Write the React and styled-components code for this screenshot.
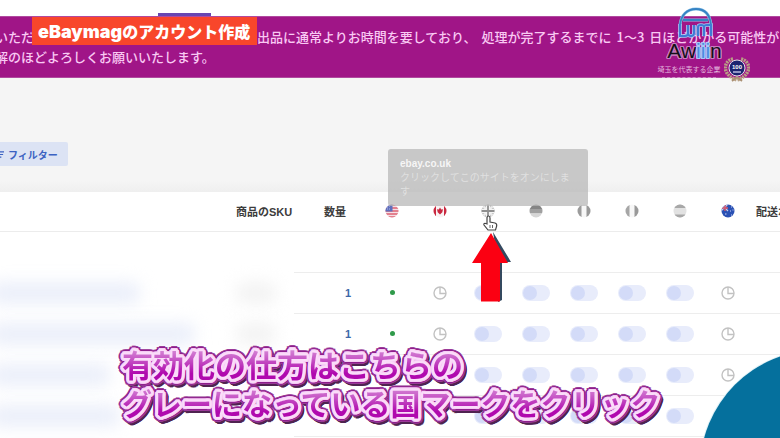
import React from 'react';
import styled, { createGlobalStyle, css } from 'styled-components';

const GlobalStyle = createGlobalStyle`
  * { box-sizing: border-box; }
  body {
    margin: 0;
    background: #fff;
    font-family: "Liberation Sans", "Noto Sans CJK JP", sans-serif;
    color: #333;
  }
  button { font: inherit; border: 0; padding: 0; margin: 0; background: none; cursor: pointer; }
`;

const ring = (radius, color, dx = 0, dy = 0) =>
  Array.from({ length: 24 }, (_, i) => {
    const a = (i / 24) * Math.PI * 2;
    return `${(Math.cos(a) * radius + dx).toFixed(2)}px ${(Math.sin(a) * radius + dy).toFixed(2)}px 0 ${color}`;
  }).join(', ');

const Scene = styled.main`
  position: relative;
  min-height: 100vh;
  max-height: 100vh;
  overflow: hidden;
  background: #fff;
`;

const TabStrip = styled.div`
  height: 16px;
  padding-left: 158px;
  display: flex;
  align-items: flex-end;
`;

const ActiveTab = styled.span`
  width: 53px;
  height: 3px;
  background: #6746b2;
`;

const Notice = styled.section`
  height: 62px;
  padding-top: 10px;
  background: #a01587;
  border-top: 1px solid #b04a9f;
  border-bottom: 1px solid #b04a9f;
  color: #f9c9f3;
  font-size: 13px;
  font-weight: 500;
  font-family: "Noto Sans CJK JP", sans-serif;
  line-height: 20px;
  white-space: nowrap;
`;

const NoticeLine = styled.p`
  margin: 0 0 0 -5px;
  display: flex;
`;

const Lead = styled.span`
  flex: none;
  width: 262px;
`;

const Clauses = styled.span`
  display: flex;
  gap: 5px;
`;

const Toolbar = styled.div`
  height: 114px;
  display: flex;
  align-items: flex-start;
  padding-top: 64px;
  background: linear-gradient(#f5f5f5 90%, #efefef);
`;

const FilterButton = styled.button`
  && {
    display: flex;
    align-items: center;
    gap: 4px;
    height: 24px;
    margin-left: -8px;
    padding: 0 10px 0 4px;
    border-radius: 2px;
    background: #dce3f4;
    color: #3b62c2;
    font-size: 10px;
    font-weight: 700;
  }
`;

const Table = styled.table`
  width: 100%;
  table-layout: fixed;
  border-collapse: collapse;
  font-size: 11px;
`;

const Col = styled.col`
  width: ${(p) => (p.$w ? `${p.$w}px` : 'auto')};
`;

const HeadCell = styled.th`
  height: 39px;
  padding: 0 ${(p) => p.$right || 0}px 0 ${(p) => p.$left || 0}px;
  border-bottom: 1px solid #ececec;
  text-align: ${(p) => p.$align || 'center'};
  color: #3c3c3c;
  white-space: nowrap;
`;

const Cell = styled.td`
  height: 41px;
  padding: 0 ${(p) => p.$right || 0}px 0 0;
  text-align: ${(p) => p.$align || 'center'};
  vertical-align: middle;
  ${(p) => p.$line && css`border-bottom: 1px solid #ededed;`}
`;

const Smudge = styled.div`
  height: 22px;
  width: ${(p) => p.$w}px;
  margin-left: ${(p) => p.$x || 0}px;
  border-radius: 8px;
  background: ${(p) => p.$c};
  filter: blur(8px);
`;

const Quantity = styled.a`
  color: #3d68a8;
  font-weight: 700;
  text-decoration: none;
`;

const FlagButton = styled.button`
  display: block;
  && { margin: 0 auto; }
  width: 14px;
  height: 14px;
  svg { display: block; }
`;

const Centered = styled.span`
  display: flex;
  justify-content: center;
`;

const Dot = styled.span`
  width: 5px;
  height: 5px;
  border-radius: 50%;
  background: #2f9a4a;
`;

const Toggle = styled.input`
  appearance: none;
  display: block;
  width: 28px;
  height: 16px;
  margin: 0 auto;
  border-radius: 8px;
  background: #e8ecfb;
  &::before {
    content: "";
    display: block;
    width: 14px;
    height: 14px;
    margin: 1px;
    border-radius: 50%;
    background: #d3dbf8;
  }
`;

const Tooltip = styled.div`
  position: absolute;
  left: 388px;
  top: 149px;
  width: 200px;
  height: 57px;
  padding: 8px 12px;
  border-radius: 3px;
  background: rgba(184, 184, 184, 0.74);
  color: rgba(255, 255, 255, 0.45);
  font-size: 10px;
  line-height: 14px;
`;

const Site = styled.strong`
  display: block;
  color: rgba(255, 255, 255, 0.85);
`;

const TitleTag = styled.h1`
  position: absolute;
  left: 32px;
  top: 17px;
  display: flex;
  align-items: center;
  height: 28px;
  margin: 0;
  padding: 0 7px 0 6px;
  background: #f8462b;
  color: #fff;
  font-family: "Noto Sans CJK JP", sans-serif;
  font-weight: 900;
  font-size: 16px;
  white-space: nowrap;
  span { font-family: Inter, sans-serif; font-size: 18px; }
`;

const Brand = styled.div`
  position: absolute;
  right: 28px;
  top: 7px;
  display: grid;
  grid-template-columns: 70px 28px;
`;

const BrandMain = styled.div`
  display: flex;
  flex-direction: column;
  align-items: center;
  padding-bottom: 4px;
  svg { margin-left: 14px; }
`;

const BrandName = styled.div`
  margin: 1px 0 0 11px;
  height: 24px;
  font-size: 21px;
  line-height: 24px;
  color: #141018;
  text-shadow: ${ring(1, '#c77bbd')};
  span { color: #4c8de0; text-shadow: ${ring(1, '#a9c6f5')}; }
`;

const BrandTag = styled.div`
  margin-top: 2px;
  font-size: 7px;
  line-height: 10px;
  color: #e3b7dd;
  white-space: nowrap;
`;

const BrandRule = styled.div`
  width: 54px;
  margin-top: 2px;
  border-top: 1px dashed #cf86c5;
`;

const BadgeSlot = styled.div`
  align-self: end;
  height: 26px;
`;

const ArrowMark = styled.svg`
  position: absolute;
  left: 470px;
  top: 213px;
`;

const Circle = styled.div`
  position: absolute;
  right: -158px;
  bottom: -150px;
  width: 238px;
  height: 238px;
  border-radius: 50%;
  background: #05709d;
  box-shadow: 0 0 0 1px #e2f3f8;
`;

const Caption = styled.p`
  position: absolute;
  left: 122px;
  bottom: 17px;
  margin: 0;
  font-family: "Noto Sans CJK JP", sans-serif;
  font-weight: 700;
  line-height: 38px;
  white-space: nowrap;
`;

const CaptionLine = styled.span`
  position: relative;
  display: block;
  width: max-content;
  font-size: ${(p) => p.$size}px;
  color: #fbdcfa;
  text-shadow: ${ring(2, '#fbdcfa')}, ${ring(1, '#fbdcfa')}, ${ring(3, '#f6cdf5')}, ${ring(4, '#8d1d8b')}, ${ring(5, '#9b3a99')}, ${ring(4, '#4f2350', 2, 3)};
  &::after {
    content: attr(data-text);
    position: absolute;
    inset: 0;
    color: transparent;
    text-shadow: none;
    background: linear-gradient(#d482d4 15%, #c247c1 45%, #b009ae 75%);
    background-clip: text;
  }
`;

function Flag({ code }) {
  const id = `clip-${code}`;
  return (
    <svg width="14" height="14" viewBox="0 0 14 14" aria-hidden="true">
      <clipPath id={id}><circle cx="7" cy="7" r="6.5" /></clipPath>
      <g clipPath={`url(#${id})`}>
        {code === 'us' && (
          <>
            <path d="M0 0H14V14H0Z" fill="#f4dfe5" />
            <path d="M0 1H14M0 4H14M0 7H14M0 10H14M0 13H14" stroke="#dd6272" strokeWidth="1.4" />
            <path d="M0 0H7.500V7.500H0Z" fill="#5f6fbd" />
            <path d="M2 3h1M4 2h1M2 5h1M4 5h1" stroke="#b2bce6" />
          </>
        )}
        {code === 'ca' && (
          <>
            <path d="M0 0H14V14H0Z" fill="#f8f3f4" />
            <path d="M0 0H3V14H0ZM11 0H14V14H11Z" fill="#c9283f" />
            <path d="M7 3.5L8.2 5.5 10 5.2 9.3 8.3 7 10.5 4.7 8.3 4 5.2 5.8 5.5Z" fill="#c9283f" />
          </>
        )}
        {code === 'uk' && (
          <>
            <path d="M0 0H14V14H0Z" fill="#b4b4b4" />
            <path d="M0 0L14 14M14 0L0 14" stroke="#eee" strokeWidth="2" />
            <path d="M7 0V14M0 7H14" stroke="#f4f4f4" strokeWidth="4.5" />
            <path d="M7 0V14M0 7H14" stroke="#8f8f8f" strokeWidth="1.8" />
          </>
        )}
        {code === 'de' && (
          <>
            <path d="M0 0H14V5H0Z" fill="#858585" />
            <path d="M0 5H14V9.5H0Z" fill="#a0a0a0" />
            <path d="M0 9.5H14V14H0Z" fill="#d6d6d6" />
          </>
        )}
        {(code === 'fr' || code === 'it') && (
          <>
            <path d="M0 0H14V14H0Z" fill="#f7f7f7" />
            <path d="M0 0H4.500V14H0Z" fill={code === 'fr' ? '#9b9b9b' : '#a6a6a6'} />
            <path d="M9.500 0H14V14H9.500Z" fill="#999" />
          </>
        )}
        {code === 'es' && (
          <>
            <path d="M0 0H14V14H0Z" fill="#e2e2e2" />
            <path d="M0 0H14V4H0ZM0 10.5H14V14H0Z" fill="#a8a8a8" />
          </>
        )}
        {code === 'au' && (
          <>
            <path d="M0 0H14V14H0Z" fill="#2a51b4" />
            <path d="M0 0L7 7M7 0L0 7" stroke="#c5cdec" strokeWidth="1.2" />
            <path d="M4 0V7M0 4H7" stroke="#d9566a" strokeWidth="1.4" />
            <path d="M10 3h1M9 7h1M11.5 6h1M10 11h1M4 10h1.5" stroke="#c9d4f5" strokeWidth="1" />
          </>
        )}
      </g>
    </svg>
  );
}

const Clock = () => (
  <svg width="14" height="14" viewBox="0 0 14 14" fill="none" stroke="#c2c2c2" strokeWidth="1.4" role="img" aria-label="処理中">
    <circle cx="7" cy="7" r="6" />
    <path d="M7 1V7.5H13" />
  </svg>
);

const FLAGS = [
  ['us', 'アメリカ'], ['ca', 'カナダ'], ['uk', 'イギリス'], ['de', 'ドイツ'],
  ['fr', 'フランス'], ['it', 'イタリア'], ['es', 'スペイン'], ['au', 'オーストラリア'],
];

const ROWS = [
  { blank: true },
  { w: 150, sku: true, quantity: 1 },
  { w: 205, sku: true, quantity: 1 },
  { w: 120 },
  { w: 130 },
];

function Market({ code, name, row }) {
  if (code === 'us') return <Centered><Dot /></Centered>;
  if (code === 'ca' || code === 'au') return <Centered><Clock /></Centered>;
  return <Toggle type="checkbox" aria-label={`${name} ${row}`} />;
}

function ProductTable() {
  return (
    <Table>
      <colgroup>
        <Col />
        <Col $w={64} />
        <Col $w={74} />
        {FLAGS.map(([c]) => <Col key={c} $w={48} />)}
        <Col $w={28} />
      </colgroup>
      <thead>
        <tr>
          <HeadCell />
          <HeadCell $align="left" $left={6}>商品のSKU</HeadCell>
          <HeadCell $align="right" $right={22}>数量</HeadCell>
          {FLAGS.map(([code, name]) => (
            <HeadCell key={code}>
              <FlagButton type="button" aria-label={name}><Flag code={code} /></FlagButton>
            </HeadCell>
          ))}
          <HeadCell $align="left" $left={4}>配送ポリシー</HeadCell>
        </tr>
      </thead>
      <tbody>
        {ROWS.map((r, i) => (
          <tr key={i}>
            <Cell>{!r.blank && <Smudge $w={r.w} $x={-10} $c="#ebeffa" />}</Cell>
            <Cell>{r.sku && <Smudge $w={40} $x={6} $c="#f3f3f3" />}</Cell>
            <Cell $align="right" $right={17} $line>
              {r.quantity && <Quantity href="#quantity">{r.quantity}</Quantity>}
            </Cell>
            {FLAGS.map(([code, name]) => (
              <Cell key={code} $line>
                {!r.blank && <Market code={code} name={name} row={i} />}
              </Cell>
            ))}
            <Cell $line />
          </tr>
        ))}
      </tbody>
    </Table>
  );
}

const DOME = 'M3 18C4 8 10 2 19 2S33 8 34 18M6 13H31';
const PILLARS = 'M3 17V29H8Q11 29 11 26V18M11 26Q11 29 14 29Q17 29 17 26V18M21 29V20Q21 18 24 18Q27 18 27 20V29M27 20Q27 18 30 18H34V29';

function BrandMark() {
  return (
    <Brand>
      <BrandMain>
        <svg width="38" height="31" viewBox="0 0 38 31" fill="none" aria-hidden="true">
          <path d={PILLARS} stroke="#a9cdf5" strokeWidth="3.6" />
          <path d={DOME} stroke="#8fc3e8" strokeWidth="3" />
          <path d={DOME} stroke="#3583c4" strokeWidth="1.8" />
          <path d={PILLARS} stroke="#3f7bd6" strokeWidth="2" />
        </svg>
        <BrandName>Aw<span>iii</span>n</BrandName>
        <BrandTag>埼玉を代表する企業</BrandTag>
        <BrandRule />
      </BrandMain>
      <BadgeSlot>
        <svg width="26" height="26" viewBox="0 0 26 26" aria-hidden="true">
          <path d="M9 3C3 4 0 10 2 15S8 22 13 24C18 22 22 20 24 15S23 4 17 3" fill="none" stroke="#b9a184" strokeWidth="3.500" strokeDasharray="2 .8" />
          <path d="M8 25L13 21 18 25" fill="none" stroke="#a98f72" strokeWidth="1.800" />
          <circle cx="13" cy="12" r="8" fill="#1c2470" stroke="#e8dfe8" />
          <text x="13" y="13" textAnchor="middle" fontSize="6" fontWeight="700" fill="#fff">100</text>
          <path d="M9 16H17" stroke="#b8bce0" strokeWidth="1.5" />
        </svg>
      </BadgeSlot>
    </Brand>
  );
}

const CAPTION = [
  { text: '有効化の仕方はこちらの', size: 31 },
  { text: 'グレーになっている国マークをクリック', size: 30 },
];

export default function App() {
  return (
    <>
      <GlobalStyle />
      <Scene>
        <TabStrip><ActiveTab /></TabStrip>
        <Notice>
          <NoticeLine>
            <Lead>いただ</Lead>
            <Clauses>
              <span>出品に通常よりお時間を要しており、</span>
              <span>処理が完了するまでに</span>
              <span>1〜3</span>
              <span>日ほどかかる可能性が</span>
            </Clauses>
          </NoticeLine>
          <NoticeLine>解のほどよろしくお願いいたします。</NoticeLine>
        </Notice>
        <Toolbar>
          <FilterButton type="button">
            <svg width="8" height="9" viewBox="0 0 9 9" fill="none" stroke="currentColor" strokeWidth="1.4" aria-hidden="true">
              <path d="M0 1.5H9M2 4.5H8M3 7.5H6" />
            </svg>
            フィルター
          </FilterButton>
        </Toolbar>
        <ProductTable />
        <Tooltip role="tooltip">
          <Site>ebay.co.uk</Site>
          クリックしてこのサイトをオンにします
        </Tooltip>
        <TitleTag><span>eBaymag</span>のアカウント作成</TitleTag>
        <BrandMark />
        <ArrowMark width="42" height="92" viewBox="0 0 42 92" aria-hidden="true">
          <path d="M23 19L41 49H32V87L28 89V49Z" fill="#34495f" />
          <path d="M21 20L2 50H11V88.500H30V50H38Z" fill="#fb0012" />
          <path d="M17 5q0-2 1.500-2T20 5V9l5 1q2 .6 1.700 3L25.500 17H18L14 12q-.6-1.700 1-1.700L17 11Z" fill="#fff" stroke="#444" strokeWidth="1.200" />
          <path d="M20 12V15M22.500 12V15" stroke="#666" />
        </ArrowMark>
        <Circle />
        <Caption>
          {CAPTION.map((line) => (
            <CaptionLine key={line.text} $size={line.size} data-text={line.text}>{line.text}</CaptionLine>
          ))}
        </Caption>
      </Scene>
    </>
  );
}
